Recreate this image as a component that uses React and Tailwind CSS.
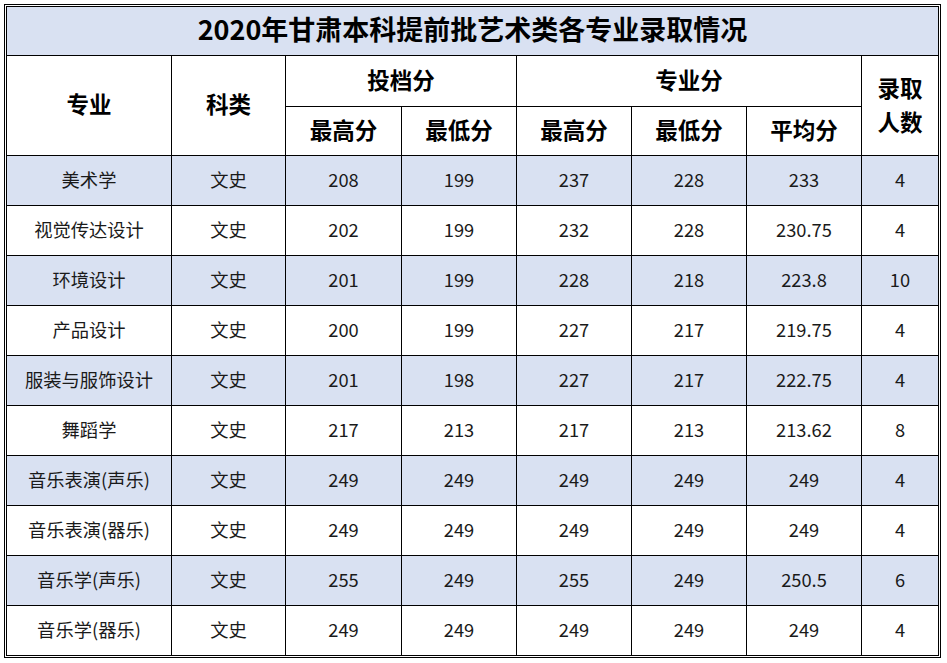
import React from 'react'

const rows = [
  ['美术学', '文史', '208', '199', '237', '228', '233', '4'],
  ['视觉传达设计', '文史', '202', '199', '232', '228', '230.75', '4'],
  ['环境设计', '文史', '201', '199', '228', '218', '223.8', '10'],
  ['产品设计', '文史', '200', '199', '227', '217', '219.75', '4'],
  ['服装与服饰设计', '文史', '201', '198', '227', '217', '222.75', '4'],
  ['舞蹈学', '文史', '217', '213', '217', '213', '213.62', '8'],
  ['音乐表演(声乐)', '文史', '249', '249', '249', '249', '249', '4'],
  ['音乐表演(器乐)', '文史', '249', '249', '249', '249', '249', '4'],
  ['音乐学(声乐)', '文史', '255', '249', '255', '249', '250.5', '6'],
  ['音乐学(器乐)', '文史', '249', '249', '249', '249', '249', '4'],
]

const App = () => {
  return (
    <div className="w-[947px] h-[663px] bg-white p-1" style={{ fontFamily: '"Noto Sans CJK SC", "Noto Sans", sans-serif' }}>
      <div className="w-[937px] border border-black p-px">
        <div className="grid grid-cols-[164px_113px_115px_114px_114px_114px_114px_76px] grid-rows-[48px_50px_48px_repeat(10,49px)] gap-px bg-black p-px">
          <div className="col-span-8 bg-[#d9e1f2] flex items-center justify-center pb-[3px] text-[27px] font-bold text-black">
            2020年甘肃本科提前批艺术类各专业录取情况
          </div>

          <div className="row-span-2 bg-white flex items-center justify-center pb-[3px] text-[22.5px] font-bold text-black">专业</div>
          <div className="row-span-2 bg-white flex items-center justify-center pb-[3px] text-[22.5px] font-bold text-black">科类</div>
          <div className="col-span-2 bg-white flex items-center justify-center pb-[3px] text-[22.5px] font-bold text-black">投档分</div>
          <div className="col-span-3 bg-white flex items-center justify-center pb-[3px] text-[22.5px] font-bold text-black">专业分</div>
          <div className="row-span-2 bg-white flex flex-col items-center justify-center pb-[3px] text-[22.5px] leading-[34px] font-bold text-black">
            <span>录取</span>
            <span>人数</span>
          </div>
          <div className="bg-white flex items-center justify-center pb-[3px] text-[22.5px] font-bold text-black">最高分</div>
          <div className="bg-white flex items-center justify-center pb-[3px] text-[22.5px] font-bold text-black">最低分</div>
          <div className="bg-white flex items-center justify-center pb-[3px] text-[22.5px] font-bold text-black">最高分</div>
          <div className="bg-white flex items-center justify-center pb-[3px] text-[22.5px] font-bold text-black">最低分</div>
          <div className="bg-white flex items-center justify-center pb-[3px] text-[22.5px] font-bold text-black">平均分</div>

          {rows.map((row, i) =>
            row.map((cell, j) => (
              <div
                key={i + '-' + j}
                className={(i % 2 === 0 ? 'bg-[#d9e1f2]' : 'bg-white') + ' flex items-center justify-center pb-[2px] text-[18.3px] text-[#1a1a1a]'}
              >
                {cell}
              </div>
            ))
          )}
        </div>
      </div>
    </div>
  )
}

export default App
